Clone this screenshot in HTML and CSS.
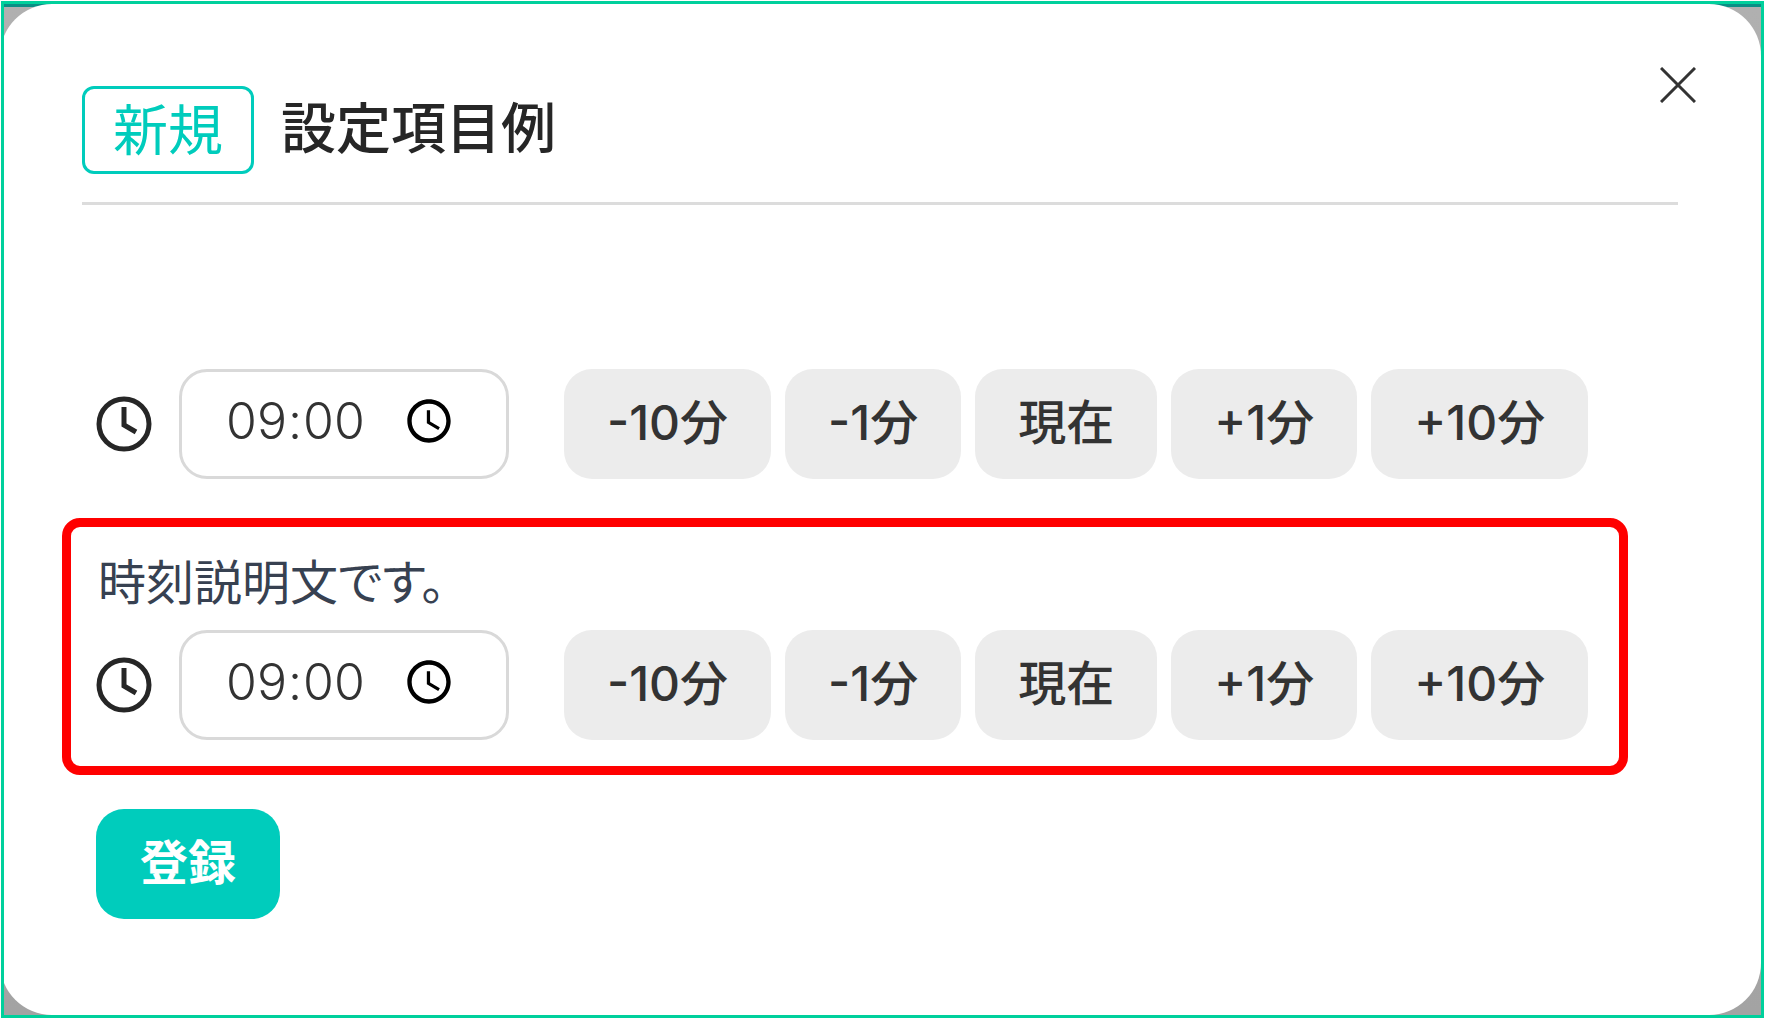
FILE: index.html
```html
<!DOCTYPE html>
<html lang="ja">
<head>
  <meta charset="UTF-8">
  <title>設定項目例</title>
  <link rel="stylesheet" href="styles.css">
</head>
<body>

  <div class="frame">
    <main class="modal">
      <button type="button" class="btn-close" aria-label="閉じる">
        <svg viewBox="0 0 36 36"><path d="M1 1 35 35M35 1 1 35"/></svg>
      </button>

      <header class="modal-header">
        <span class="badge">新規</span>
        <h1 class="title">設定項目例</h1>
      </header>

      <form class="form">
        <div class="time-row">
          <label class="time-label" for="time1" aria-label="時刻">
            <svg class="clock" viewBox="0 0 56 56"><circle cx="28" cy="28" r="25"/><path d="M28 11V29L40 36"/></svg>
          </label>
          <input class="time-input" type="time" id="time1" value="09:00">
          <div class="time-buttons">
            <button type="button" class="btn" data-step="-10">-10分</button>
            <button type="button" class="btn" data-step="-1">-1分</button>
            <button type="button" class="btn" data-step="0">現在</button>
            <button type="button" class="btn" data-step="1">+1分</button>
            <button type="button" class="btn" data-step="10">+10分</button>
          </div>
        </div>

        <div class="highlight">
          <p class="description" id="desc2">時刻説明文です。</p>
          <div class="time-row">
            <label class="time-label" for="time2" aria-label="時刻">
              <svg class="clock" viewBox="0 0 56 56"><circle cx="28" cy="28" r="25"/><path d="M28 11V29L40 36"/></svg>
            </label>
            <input class="time-input" type="time" id="time2" value="09:00" aria-describedby="desc2">
            <div class="time-buttons">
              <button type="button" class="btn" data-step="-10">-10分</button>
              <button type="button" class="btn" data-step="-1">-1分</button>
              <button type="button" class="btn" data-step="0">現在</button>
              <button type="button" class="btn" data-step="1">+1分</button>
              <button type="button" class="btn" data-step="10">+10分</button>
            </div>
          </div>
        </div>

        <button type="submit" class="btn btn-primary">登録</button>
      </form>
    </main>
  </div>

</body>
</html>
```
FILE: styles.css
```css
* {
  box-sizing: border-box;
}

body {
  margin: 0;
  padding: 1px;
  background-color: #fff;
  color: #262626;
  font-family: Inter, "Noto Sans CJK JP", sans-serif;
  font-size: 48px;
}

.frame {
  display: flex;
  min-height: calc(100vh - 2px);
  border: 3px solid #00d09c;
  background: linear-gradient(#0a8f85 3px, #b0b0b0 3px, #a3a3a3);
  overflow: hidden;
}

.modal {
  position: relative;
  flex: 1;
  margin-left: -4px;
  padding: 82px 83px 80px 82px;
  background-color: #fff;
  border-radius: 52px;
}

.btn-close {
  position: absolute;
  top: 63px;
  right: 65px;
  padding: 0;
  border: none;
  background: none;
  cursor: pointer;
}

.btn-close svg {
  display: block;
  width: 36px;
  height: 36px;
  fill: none;
  stroke: #333;
  stroke-width: 3;
}

.modal-header {
  display: flex;
  align-items: center;
  gap: 27px;
  padding-bottom: 28px;
  border-bottom: 3px solid #dcdcdc;
}

.badge {
  padding: 0 28px 8px;
  border: 3px solid #00ccbc;
  border-radius: 12px;
  color: #00ccbc;
  font-family: "Noto Sans CJK JP", sans-serif;
  font-size: 55px;
  line-height: 74px;
}

.title {
  margin: 0;
  padding-bottom: 12px;
  font-family: "Noto Sans CJK JP", sans-serif;
  font-size: 55px;
  font-weight: 500;
  line-height: 74px;
}

.form {
  margin-top: 164px;
  padding-left: 14px;
}

.time-row {
  display: flex;
  align-items: center;
}

.time-label {
  margin-right: 27px;
}

.clock {
  display: block;
  width: 56px;
  height: 56px;
  fill: none;
  stroke: #262626;
  stroke-width: 5;
}

.time-input {
  width: 330px;
  height: 110px;
  margin-right: 55px;
  padding: 0 48px 6px 43px;
  border: 3px solid #d9d9d9;
  border-radius: 28px;
  background-color: #fff;
  color: #333;
  font-family: Inter, sans-serif;
  font-size: 50px;
  font-weight: 300;
}

.time-input::-webkit-datetime-edit-ampm-field {
  display: none;
}

.time-buttons {
  display: flex;
  gap: 14px;
}

.btn {
  height: 110px;
  padding: 0 43px 10px;
  border: none;
  border-radius: 28px;
  background-color: #ececec;
  color: #333;
  font-family: Inter, "Noto Sans CJK JP", sans-serif;
  font-size: 48px;
  font-weight: 500;
  white-space: nowrap;
  cursor: pointer;
}

.btn-primary {
  padding: 0 44px 10px;
  background-color: #00ccbc;
  color: #fff;
  font-weight: 700;
}

.highlight {
  width: fit-content;
  margin: 39px 0 34px -34px;
  padding: 16px 31px 26px 25px;
  border: 9px solid #f00;
  border-radius: 18px;
}

.description {
  margin: 0 0 15px;
  padding-left: 2px;
  color: #374151;
  font-family: "Noto Sans CJK JP", sans-serif;
  font-feature-settings: "palt";
  font-weight: 400;
  line-height: 72px;
}
```
